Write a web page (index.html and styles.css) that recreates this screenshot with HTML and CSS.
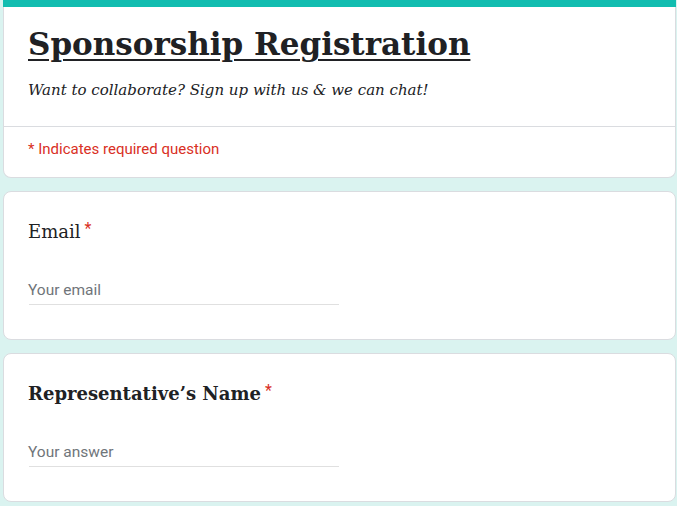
FILE: index.html
```html
<!DOCTYPE html>
<html lang="en">
<head>
<meta charset="utf-8">
<title>Sponsorship Registration</title>
<link rel="stylesheet" href="styles.css">
</head>
<body>
<main class="form">
  <section class="card header-card">
    <div class="accent"></div>
    <div class="header-body">
      <h1 class="title">Sponsorship Registration</h1>
      <p class="subtitle">Want to collaborate? Sign up with us &amp; we can chat!</p>
    </div>
    <div class="required-note">* Indicates required question</div>
  </section>

  <section class="card question">
    <div class="q-label">Email<span class="star">*</span></div>
    <div class="q-input">Your email</div>
  </section>

  <section class="card question">
    <div class="q-label q-bold">Representative’s Name<span class="star">*</span></div>
    <div class="q-input">Your answer</div>
  </section>
</main>
</body>
</html>
```

FILE: styles.css
```css
html, body {
  margin: 0;
  padding: 0;
}
body {
  background: #daf3f0;
  height: 506px;
  overflow: hidden;
}
.form {
  display: flex;
  flex-direction: column;
  gap: 13px;
  width: 673px;
  margin-left: 3px;
}
.card {
  background: #ffffff;
  border: 1px solid #dadce0;
  border-radius: 8px;
  box-sizing: border-box;
}
.header-card {
  border-top: none;
  border-top-left-radius: 0;
  border-top-right-radius: 0;
  height: 178px;
  display: flex;
  flex-direction: column;
}
.accent {
  height: 7px;
  background: #12bdb0;
  margin: 0 -1px;
}
.header-body {
  padding: 17px 24px 0 24px;
  height: 120px;
  box-sizing: border-box;
  border-bottom: 1px solid #dadce0;
}
.title {
  margin: 0;
  font-family: "DejaVu Serif", Georgia, serif;
  font-weight: bold;
  font-size: 31px;
  line-height: 40px;
  color: #202124;
  text-decoration: underline;
  text-decoration-thickness: 2px;
  text-underline-offset: 4px;
}
.subtitle {
  margin: 15px 0 0 0;
  font-family: "DejaVu Serif", Georgia, serif;
  font-style: italic;
  font-size: 15px;
  line-height: 22px;
  color: #202124;
}
.required-note {
  padding: 12px 24px 0 24px;
  font-family: Roboto, "Liberation Sans", sans-serif;
  font-size: 15px;
  line-height: 20px;
  color: #d93025;
}
.question {
  height: 149px;
  padding: 26px 24px 0 24px;
}
.q-label {
  font-family: "DejaVu Serif", Georgia, serif;
  font-size: 18px;
  line-height: 28px;
  color: #202124;
}
.q-bold {
  font-weight: bold;
}
.star {
  color: #d93025;
  font-family: Roboto, "Liberation Sans", sans-serif;
  font-weight: normal;
  font-size: 16px;
  margin-left: 4px;
  vertical-align: top;
  line-height: 22px;
}
.q-input {
  margin-top: 34px;
  width: 310px;
  margin-left: 1px;
  border-bottom: 1px solid #e0e0e0;
  font-family: Roboto, "Liberation Sans", sans-serif;
  font-size: 15.5px;
  line-height: 20px;
  padding-bottom: 4px;
  color: #70757a;
  text-indent: -1px;
}
```
